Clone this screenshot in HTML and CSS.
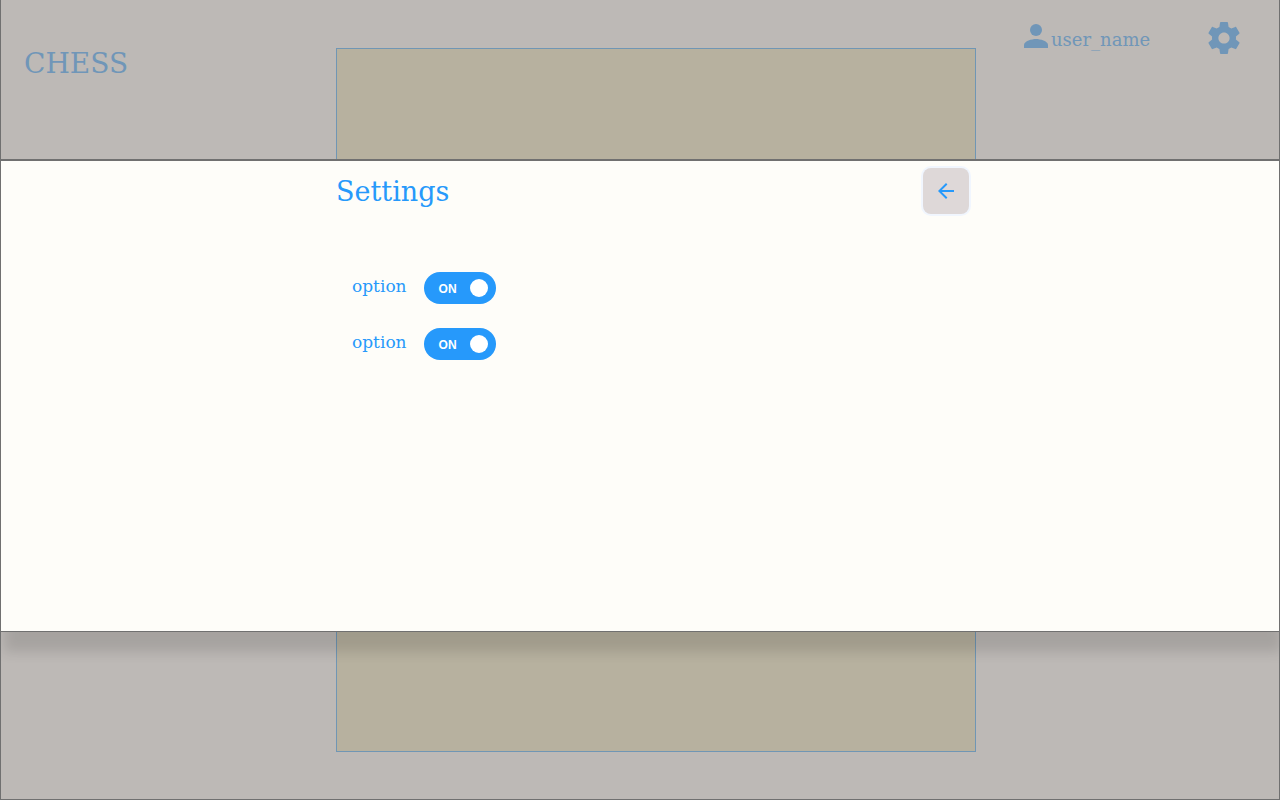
FILE: index.html
```html
<!DOCTYPE html>
<html lang="en">
<head>
<meta charset="utf-8">
<meta name="viewport" content="width=device-width, initial-scale=1">
<title>Chess</title>
<link rel="stylesheet" href="styles.css">
</head>
<body>
<div class="page">
  <h1 class="brand">CHESS</h1>
  <main class="board"></main>
  <nav class="account">
    <a class="user" href="#user">
      <svg class="user-icon" viewBox="0 0 24 24" aria-hidden="true"><circle cx="12" cy="6" r="6"/><path d="M0 24v-3c0-4 8-6 12-6s12 2 12 6v3z"/></svg>
      <span>user_name</span>
    </a>
    <button class="gear" type="button" aria-label="Settings">
      <svg viewBox="2 2 20 20" aria-hidden="true"><path d="M19.43 12.98c.04-.32.07-.64.07-.98s-.03-.66-.07-.98l2.11-1.65c.19-.15.24-.42.12-.64l-2-3.46c-.12-.22-.39-.3-.61-.22l-2.49 1c-.52-.4-1.08-.73-1.69-.98l-.38-2.65C14.46 2.18 14.25 2 14 2h-4c-.25 0-.46.18-.49.42l-.38 2.65c-.61.25-1.17.59-1.69.98l-2.49-1c-.23-.09-.49 0-.61.22l-2 3.46c-.13.22-.07.49.12.64l2.11 1.65c-.04.32-.07.65-.07.98s.03.66.07.98l-2.11 1.65c-.19.15-.24.42-.12.64l2 3.46c.12.22.39.3.61.22l2.49-1c.52.4 1.08.73 1.69.98l.38 2.65c.03.24.24.42.49.42h4c.25 0 .46-.18.49-.42l.38-2.65c.61-.25 1.17-.59 1.69-.98l2.49 1c.23.09.49 0 .61-.22l2-3.46c.12-.22.07-.49-.12-.64l-2.11-1.65zM12 15.5c-1.93 0-3.5-1.57-3.5-3.5s1.57-3.5 3.5-3.5 3.5 1.57 3.5 3.5-1.57 3.5-3.5 3.5z"/></svg>
    </button>
  </nav>
  <section class="dialog" role="dialog" aria-labelledby="settings-title">
    <div class="panel">
      <header class="panel-head">
        <h2 class="title" id="settings-title">Settings</h2>
        <button class="back" type="button" aria-label="Back">
          <svg viewBox="4 4 16 16" aria-hidden="true"><path d="M20 11H7.83l5.59-5.59L12 4l-8 8 8 8 1.41-1.41L7.83 13H20v-2z"/></svg>
        </button>
      </header>
      <div class="options">
        <label class="option">
          <span>option</span>
          <span class="switch"><input type="checkbox" role="switch" checked><span class="state">ON</span><span class="knob"></span></span>
        </label>
        <label class="option">
          <span>option</span>
          <span class="switch"><input type="checkbox" role="switch" checked><span class="state">ON</span><span class="knob"></span></span>
        </label>
      </div>
    </div>
  </section>
</div>
</body>
</html>
```
FILE: styles.css
```css
* { box-sizing: border-box; }

body {
  margin: 0;
  font-family: "DejaVu Serif", serif;
  font-size: 17px;
  line-height: 24px;
}

h1, h2 { margin: 0; font-size: 28px; font-weight: 400; line-height: 36px; }

button { padding: 0; border: 0; background: none; cursor: pointer; }

svg { display: block; fill: currentColor; }

.page {
  position: relative;
  display: grid;
  grid-template-columns: 335fr 640fr 303fr;
  min-height: 100vh;
  overflow: hidden;
  border: 1px solid #707070;
  border-top: 0;
  background: #bdb9b6;
  color: #7096b8;
}

.brand { padding: 46px 0 0 23px; }

.board {
  margin: 48px 0 47px;
  border: 1px solid #7096b4;
  background: #b7b19f;
}

.account {
  display: flex;
  justify-content: space-between;
  align-items: flex-start;
  padding: 22px 39px 0 48px;
}

.user {
  display: flex;
  gap: 3px;
  padding-top: 2px;
  color: inherit;
  font-size: 18px;
  text-decoration: none;
}

.user span { padding-top: 4px; }
.user-icon { width: 24px; height: 24px; }

.gear { color: inherit; }
.gear svg { width: 32px; height: 32px; }

.dialog {
  position: absolute;
  top: 159px;
  left: 0;
  right: 0;
  display: grid;
  grid-template-columns: 335fr 640fr 303fr;
  min-height: 473px;
  border-top: 2px solid #707070;
  border-bottom: 1px solid #707070;
  background: #fefdf9;
  color: #2699fb;
  box-shadow: 3px 20px 12px rgba(0, 0, 0, 0.12);
}

.panel { grid-column: 2; }

.panel-head {
  display: flex;
  justify-content: space-between;
  align-items: flex-start;
  padding: 7px 7px 0 0;
}

.title { padding-top: 6px; font-size: 27px; }

.back {
  display: grid;
  place-items: center;
  width: 46px;
  height: 46px;
  border-radius: 8px;
  background: #ded8d8;
  box-shadow: 0 0 0 2px #f1f6fe;
  color: #2699fb;
}

.back svg { width: 16px; height: 16px; }

.options {
  display: flex;
  flex-direction: column;
  align-items: flex-start;
  gap: 24px;
  padding: 58px 16px 24px;
}

.option {
  display: flex;
  align-items: flex-start;
  gap: 17px;
}

.option > span:first-child { padding-top: 2px; }

.switch {
  position: relative;
  display: flex;
  align-items: center;
  justify-content: space-between;
  width: 72px;
  height: 32px;
  padding: 0 8px 0 15px;
  border-radius: 16px;
  background: #2699fb;
  color: #fff;
}

.switch input {
  position: absolute;
  inset: 0;
  width: 100%;
  height: 100%;
  margin: 0;
  appearance: none;
  border-radius: 16px;
  cursor: pointer;
}

.state {
  padding-top: 2px;
  font: bold 12px/16px "Liberation Sans", Arial, sans-serif;
}

.knob {
  width: 18px;
  height: 18px;
  border-radius: 50%;
  background: #fff;
}
```
